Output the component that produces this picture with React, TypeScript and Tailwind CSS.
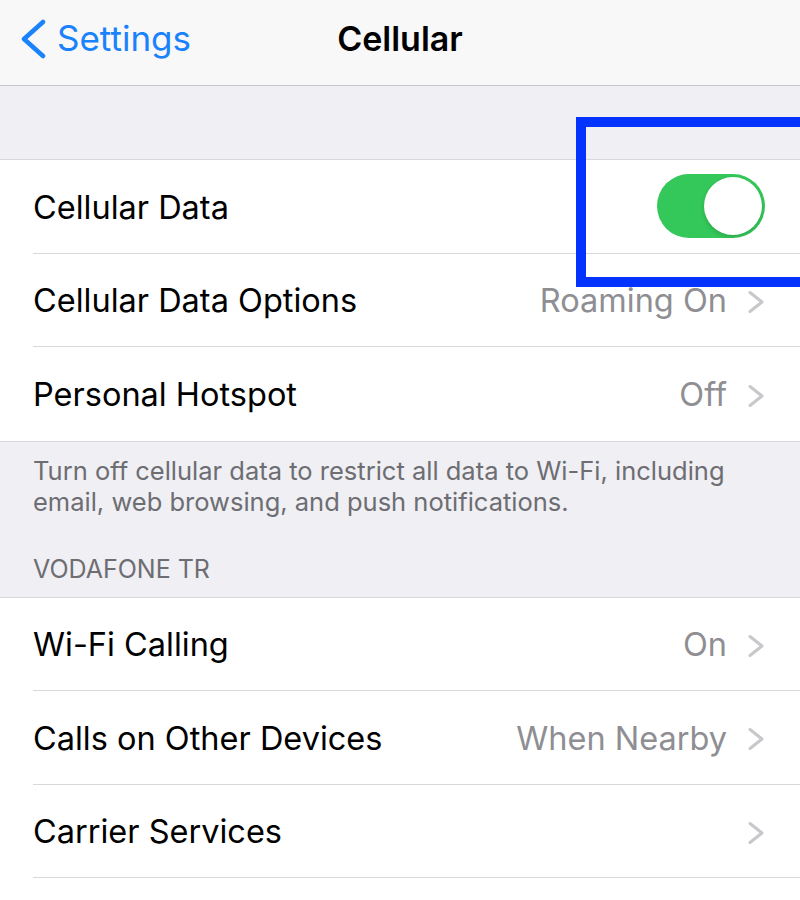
type Row = { label: string; value?: string; toggle?: boolean };

const cellularRows: Row[] = [
  { label: 'Cellular Data', toggle: true },
  { label: 'Cellular Data Options', value: 'Roaming On' },
  { label: 'Personal Hotspot', value: 'Off' },
];

const carrierRows: Row[] = [
  { label: 'Wi-Fi Calling', value: 'On' },
  { label: 'Calls on Other Devices', value: 'When Nearby' },
  { label: 'Carrier Services' },
];

const Chevron = () => (
  <svg width="18" height="24" viewBox="0 0 18 24" fill="none" className="shrink-0">
    <polyline
      points="3,2.5 15,12 3,21.5"
      stroke="#c7c7cc"
      strokeWidth="3"
      strokeLinecap="round"
      strokeLinejoin="round"
    />
  </svg>
);

const Toggle = () => (
  <div className="relative -mt-[4px] h-[64px] w-[108px] rounded-full bg-[#34c759]">
    <div className="absolute right-[3px] top-[3px] h-[58px] w-[58px] rounded-full bg-white shadow-[0_2px_4px_rgba(0,0,0,0.15)]" />
  </div>
);

const SettingsRow = ({ row, last }: { row: Row; last: boolean }) => (
  <div className="pl-[33px]">
    <div
      className={
        'flex h-[93.5px] items-center pt-[4px] pr-[35px] ' +
        (last ? '' : 'border-b border-[#d8d8dc]')
      }
    >
      <span className="flex-1 text-[32.5px] text-black">{row.label}</span>
      {row.toggle ? (
        <Toggle />
      ) : (
        <div className="flex items-center gap-[20px]">
          {row.value && <span className="text-[32.5px] text-[#8e8e93]">{row.value}</span>}
          <Chevron />
        </div>
      )}
    </div>
  </div>
);

const Group = ({ rows }: { rows: Row[] }) => (
  <div className="border-y border-[#d8d8dc] bg-white">
    {rows.map((r, i) => (
      <SettingsRow key={r.label} row={r} last={i === rows.length - 1} />
    ))}
  </div>
);

export default function App() {
  return (
    <div
      className="relative h-[900px] w-[800px] overflow-hidden bg-[#efeff4]"
      style={{ fontFamily: 'Inter, "Noto Sans", sans-serif' }}
    >
      {/* nav bar */}
      <div className="relative flex h-[86px] items-center border-b border-[#c8c8cc] bg-[#f8f8f9] pb-[8px]">
        <div className="flex items-center gap-[10px] pl-[19px] text-[#1a82fb]">
          <svg width="28" height="40" viewBox="0 0 28 40" fill="none">
            <polyline
              points="24,3 5,20 24,37"
              stroke="#1a82fb"
              strokeWidth="4.5"
              strokeLinecap="round"
              strokeLinejoin="round"
            />
          </svg>
          <span className="text-[35px]">Settings</span>
        </div>
        <span className="absolute left-1/2 top-[13px] -translate-x-1/2 text-[34px] font-semibold text-black">
          Cellular
        </span>
      </div>

      <div className="h-[73px]" />

      <Group rows={cellularRows} />

      <div className="px-[33px] pt-[13px] text-[25.5px] leading-[31px] text-[#6d6d72]">
        Turn off cellular data to restrict all data to Wi-Fi, including email, web browsing, and push notifications.
      </div>
      <div className="px-[33px] pt-[37px] pb-[13px] text-[25px] leading-[30px] uppercase text-[#6d6d72]">
        Vodafone TR
      </div>

      <div className="border-t border-[#d8d8dc] bg-white">
        {carrierRows.map((r) => (
          <SettingsRow key={r.label} row={r} last={false} />
        ))}
        <div className="h-[30px]" />
      </div>

      {/* highlight box */}
      <div className="absolute left-[576px] top-[117px] h-[170px] w-[234px] border-[10px] border-[#0433ff]" />
    </div>
  );
}
